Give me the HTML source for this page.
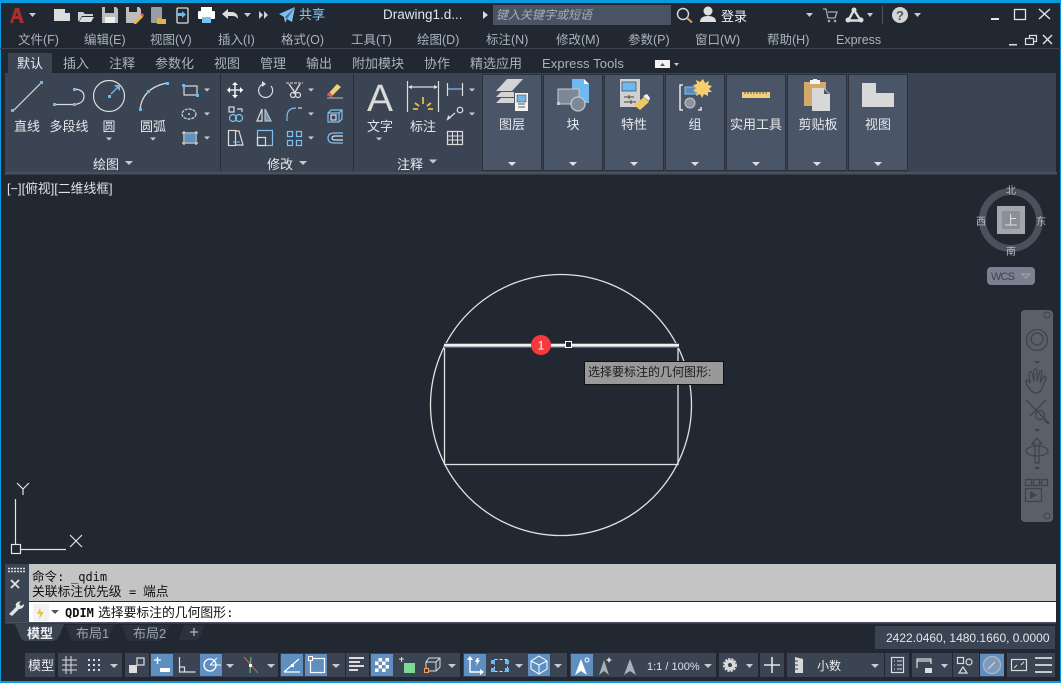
<!DOCTYPE html>
<html><head><meta charset="utf-8"><style>
html,body{margin:0;padding:0;background:#212832;width:1061px;height:683px;overflow:hidden}
svg{display:block;position:absolute;left:0;top:0}
text{font-family:"Liberation Sans","Noto Sans CJK SC",sans-serif}
.m{font-size:12.5px;fill:#aab3bd}
.t{font-size:13px;fill:#aab3bd}
.l{font-size:13px;fill:#e4e7ea;text-anchor:middle}
.p{font-size:13px;fill:#e8eaec;text-anchor:middle}
.c{font-family:"DejaVu Sans Mono","Liberation Mono","Noto Sans CJK SC",monospace;font-size:12px;fill:#111}
.g{fill:#3b4453}
.a{fill:#5f8fc1}
.w{fill:none;stroke:#dcdcdc;stroke-width:1.2}
.b{fill:none;stroke:#7cc0f0;stroke-width:1.2}
.tr{fill:#c8ccd0}
.n{fill:none;stroke:#3e444d;stroke-width:1.3}
</style></head><body>
<svg width="1061" height="683" viewBox="0 0 1061 683" xmlns="http://www.w3.org/2000/svg">
<rect width="1061" height="683" fill="#212832"/>
<!-- window border -->
<rect width="1061" height="3" fill="#0a9ae0"/>
<rect width="1" height="683" fill="#0a9ae0"/>
<rect x="1060" width="1" height="683" fill="#0a9ae0"/>
<rect y="681" width="1061" height="2" fill="#0a9ae0"/>

<!-- title bar -->
<path d="M10 23L15 8h4l5 15h-4l-1-4h-5l-1 4zM15.500 16h2.500l-1.200-4z" fill="#a92e2e" fill-rule="evenodd"/>
<path d="M29 13h7l-3.500 4z" class="tr"/>
<path d="M54 9h11l5 4v8H54z" fill="#dcdcdc"/><path d="M65 9l5 4h-5z" fill="#212832"/>
<path d="M78 12h5l2 2h8v2H82l-3 5h-1z" fill="#cfcfcf"/><path d="M82 17h12l-3 5H79z" fill="#dcdcdc"/>
<path d="M102 7h14l2 2v14h-16z" fill="#bdbdbd"/><rect x="105" y="7" width="9" height="6" fill="#212832"/><rect x="105" y="17" width="10" height="6" fill="#eee"/>
<path d="M126 7h13l2 2v8l-6 6h-9z" fill="#bdbdbd"/><rect x="129" y="7" width="8" height="5" fill="#212832"/><path d="M134 22l7-7 2 2-7 7h-2z" fill="#e9b949"/><path d="M140 14l2-1 2 2-1 2z" fill="#e25a5a"/>
<rect x="151" y="7" width="11" height="16" rx="1" fill="#9a9ea3"/><path d="M157 18h4l1 1h4v5h-9z" fill="#e3b04b"/>
<rect x="177" y="8" width="11" height="15" rx="1" fill="none" stroke="#ddd" stroke-width="1.300"/><path d="M176 13h6v-2l4 3.500-4 3.500v-2h-6z" fill="#6cb8ee"/>
<rect x="201" y="7" width="11" height="4" fill="#fff"/><rect x="198" y="11" width="17" height="8" rx="1" fill="#fff"/><rect x="202" y="17" width="9" height="6" fill="#7cc0f0"/>
<path d="M222 14l6-5v3h5q5 1 5 7-2-3-5-3h-5v3z" fill="#dcdcdc"/>
<path d="M244 13h7l-3.500 4z" class="tr"/>
<path d="M259 11l4 4-4 4zM264 11l4 4-4 4z" fill="#cfcfcf"/>
<path d="M279 14l16-7-3 15-5-3-2 4-1-6z" fill="#7cc0f0"/><path d="M285 17l10-10-8 12z" fill="#212832" opacity=".5"/>
<text x="299" y="19" font-size="13" fill="#8cc8f0">共享</text>
<text x="383" y="19" font-size="13.500" fill="#dce6ee">Drawing1.d...</text>
<path d="M483 11l5 4-5 4z" fill="#dcdcdc"/>
<rect x="493" y="5" width="178" height="20" fill="#4a5364"/>
<text x="496" y="19" font-size="12" font-style="italic" fill="#a8adb5">键入关键字或短语</text>
<circle cx="683" cy="14" r="5.500" fill="none" stroke="#ddd" stroke-width="1.400"/><path d="M687 18l5 4.500" stroke="#c9a860" stroke-width="2"/>
<circle cx="708" cy="11" r="4.500" fill="#e0e0e0"/><path d="M700 22q0-6 8-6t8 6z" fill="#e0e0e0"/>
<text x="721" y="21" font-size="13" fill="#f0f2f4">登录</text>
<path d="M806 13h7l-3.500 4z" class="tr"/>
<path d="M823 9h3l2 9h7l2-6h-9" fill="none" stroke="#aaa" stroke-width="1.300"/><circle cx="829" cy="21" r="1.300" fill="#aaa"/><circle cx="835" cy="21" r="1.300" fill="#aaa"/>
<path d="M854 10l7 11M854 10l-6 11M848 20.500h13" fill="none" stroke="#dcdcdc" stroke-width="2.400"/><circle cx="854" cy="10" r="2.500" fill="#ddd"/><circle cx="848" cy="20" r="2.500" fill="#ddd"/><circle cx="861" cy="20" r="2.500" fill="#ddd"/>
<path d="M867 13h6l-3 4z" class="tr"/>
<rect x="882" y="6" width="1" height="18" fill="#4e5662"/>
<circle cx="900" cy="15" r="8" fill="#d4d4d4"/><text x="900" y="20" font-size="13" font-weight="bold" fill="#55595f" text-anchor="middle">?</text>
<path d="M914 13h7l-3.500 4z" class="tr"/>
<rect x="991" y="18" width="8" height="2" fill="#e4e4e4"/>
<rect x="1014.500" y="9.500" width="11" height="10" fill="none" stroke="#e4e4e4" stroke-width="1.300"/>
<path d="M1039 9l11 10M1050 9l-11 10" stroke="#e4e4e4" stroke-width="1.400"/>

<!-- menu -->
<text class="m" x="18" y="44">文件(F)</text><text class="m" x="84" y="44">编辑(E)</text><text class="m" x="150" y="44">视图(V)</text><text class="m" x="218" y="44">插入(I)</text><text class="m" x="281" y="44">格式(O)</text><text class="m" x="351" y="44">工具(T)</text><text class="m" x="417" y="44">绘图(D)</text><text class="m" x="486" y="44">标注(N)</text><text class="m" x="556" y="44">修改(M)</text><text class="m" x="628" y="44">参数(P)</text><text class="m" x="695" y="44">窗口(W)</text><text class="m" x="767" y="44">帮助(H)</text><text class="m" x="836" y="44">Express</text>
<rect x="1009" y="44" width="8" height="1.500" fill="#ddd"/>
<path d="M1029.500 38.500v-3h7v6h-3" fill="none" stroke="#ddd" stroke-width="1.200"/><rect x="1025.500" y="38.500" width="8" height="6" fill="none" stroke="#ddd" stroke-width="1.200"/>
<path d="M1043 35l9 9M1052 35l-9 9" stroke="#e4e4e4" stroke-width="1.400"/>
<rect x="0" y="48" width="1061" height="1" fill="#3a424e"/>

<!-- tabs -->
<rect x="8" y="53" width="44" height="21" fill="#3b4453"/>
<text x="17" y="68" font-size="13" fill="#eceef0">默认</text>
<text class="t" x="63" y="68">插入</text><text class="t" x="109" y="68">注释</text><text class="t" x="155" y="68">参数化</text><text class="t" x="214" y="68">视图</text><text class="t" x="260" y="68">管理</text><text class="t" x="306" y="68">输出</text><text class="t" x="352" y="68">附加模块</text><text class="t" x="424" y="68">协作</text><text class="t" x="470" y="68">精选应用</text><text class="t" x="542" y="68" letter-spacing=".1">Express Tools</text>
<rect x="655" y="60" width="15" height="8" fill="#f2f2f2"/><path d="M660 66h5l-2.500-3z" fill="#555"/><path d="M674 63h5l-2.500 3z" class="tr"/>

<!-- ribbon -->
<rect x="5" y="73" width="1051" height="99" fill="#3b4453"/>
<rect x="5" y="172" width="1052" height="2.500" fill="#48505d"/>
<rect x="220" y="74" width="1" height="97" fill="#262c36"/>
<rect x="353" y="74" width="1" height="97" fill="#262c36"/>
<g fill="#4a5568" stroke="#2b313c" stroke-width="1">
<rect x="482.500" y="74.500" width="59" height="96"/><rect x="543.500" y="74.500" width="59" height="96"/><rect x="604.500" y="74.500" width="59" height="96"/><rect x="665.500" y="74.500" width="59" height="96"/><rect x="726.500" y="74.500" width="59" height="96"/><rect x="787.500" y="74.500" width="59" height="96"/><rect x="848.500" y="74.500" width="59" height="96"/>
</g>
<!-- draw -->
<path d="M13 111L41 83" stroke="#dcdcdc" stroke-width="1.200"/><rect x="11" y="109" width="3" height="3" fill="#6cb8ee"/><rect x="40" y="81" width="3" height="3" fill="#6cb8ee"/>
<path d="M55 104.500H73M75 89q9 1 9 7.500t-9 8" class="w"/><rect x="53" y="103" width="3" height="3" fill="#6cb8ee"/><rect x="73" y="103" width="3" height="3" fill="#6cb8ee"/><rect x="73" y="88" width="3" height="3" fill="#6cb8ee"/>
<circle cx="109" cy="96" r="15.500" class="w"/><rect x="108" y="95" width="3" height="3" fill="#6cb8ee"/><path d="M111 94l7-7" stroke="#6cb8ee" stroke-width="1.300"/><path d="M114 85h6v6z" fill="#6cb8ee"/>
<path d="M140 110q2-22 27-27" class="w"/><rect x="139" y="108" width="3" height="3" fill="#6cb8ee"/><rect x="147" y="90" width="3" height="3" fill="#6cb8ee"/><rect x="166" y="82" width="3" height="3" fill="#6cb8ee"/>
<rect x="184" y="86" width="13" height="9" class="w"/><rect x="182" y="84" width="3" height="3" fill="#6cb8ee"/><rect x="196" y="94" width="3" height="3" fill="#6cb8ee"/>
<ellipse cx="189" cy="114" rx="7" ry="5" class="w" stroke-dasharray="3 1"/><rect x="188" y="113" width="2" height="2" fill="#6cb8ee"/>
<path d="M182 133h16M182 143h16M184 131v14M196 131v14" class="w"/><path d="M185 134h10v8h-10z" fill="#5b93c8"/>
<g class="tr"><path d="M204 88.500h6l-3 3zM204 112.500h6l-3 3zM204 136.500h6l-3 3zM106 137.500h6l-3 3zM150 137.500h6l-3 3z"/><path d="M125 161h8l-4 4z"/></g>
<text class="l" x="27" y="131">直线</text><text class="l" x="69" y="131">多段线</text><text class="l" x="109" y="131">圆</text><text class="l" x="153" y="131">圆弧</text>
<text class="p" x="106" y="169">绘图</text>
<!-- modify -->
<path d="M235 83v15M228 90h15" stroke="#e6e6e6" stroke-width="1.600"/><path d="M235 82l-3 3h6zM235 98l-3-3h6zM227 90l3-3v6zM243 90l-3-3v6z" fill="#fff"/>
<path d="M263 84a7 7 0 1 0 8 2" class="w"/><path d="M262 81v6l4-3z" fill="#ddd"/>
<path d="M286 83h17" stroke="#ddd" stroke-dasharray="3 1"/><path d="M289 84l7 10M300 84l-6 10" stroke="#ddd" stroke-width="1.400"/><circle cx="293" cy="95" r="2.500" class="w"/><circle cx="298" cy="95" r="2.500" class="w"/>
<path d="M327 95l10-11 4 3-10 10z" fill="#f0cf7a"/><path d="M327 95l3-3 3 4-2 1z" fill="#e25a5a"/><path d="M327 98h16" stroke="#bbb"/>
<rect x="229" y="107" width="5" height="5" class="w"/><path d="M237 109h5v3" class="w"/><circle cx="233" cy="118" r="3.500" class="b"/><circle cx="239" cy="118" r="3.500" class="b"/>
<path d="M262 109l-5 12h5z" class="w"/><path d="M265 109l6 12h-6z" class="w" style="stroke:#aebed0;fill:#7f93a8"/>
<path d="M287 121v-4q0-9 9-9" class="b"/><path d="M298 108h4" class="w"/>
<path d="M328 113l3-3h11v9l-3 3h-11z" class="b"/><path d="M328 113h11v9M339 113l3-3" class="b"/><rect x="331" y="115" width="5" height="5" class="w"/>
<rect x="228.500" y="130.500" width="7" height="15" class="w"/><path d="M235 131h4l4 14h-8" class="w"/><path d="M233 142h7" stroke="#7cc0f0"/>
<rect x="257.500" y="130.500" width="15" height="15" class="b"/><rect x="257.500" y="137.500" width="8" height="8" class="w"/>
<rect x="287.500" y="131.500" width="5" height="5" class="b"/><rect x="296.500" y="131.500" width="5" height="5" class="b"/><rect x="287.500" y="140.500" width="5" height="5" class="b"/><rect x="296.500" y="140.500" width="5" height="5" class="b"/>
<path d="M343 133h-9q-6 0-6 5t6 5h9" class="b"/><path d="M343 136h-8q-3 0-3 2t3 2h8" class="w"/>
<g class="tr"><path d="M308 88.500h6l-3 3zM308 112.500h6l-3 3zM308 136.500h6l-3 3z"/><path d="M299 161h8l-4 4z"/></g>
<text class="p" x="280" y="169">修改</text>
<!-- annotate -->
<text x="367" y="111" font-size="38" fill="#d9d9d9" textLength="26" lengthAdjust="spacingAndGlyphs">A</text>
<text class="l" x="380" y="131">文字</text><path d="M376 137.500h6l-3 3z" class="tr"/>
<path d="M407.500 81v31M438.500 81v31" class="w"/><path d="M409 87h28" class="w"/><path d="M408 87l4-2v4zM438 87l-4-2v4z" fill="#ddd"/>
<path d="M423 97v7M415 103l4 3M431 103l-4 3M413 109h5M428 109h5" stroke="#e9b949" stroke-width="1.800"/>
<text class="l" x="423" y="131">标注</text>
<path d="M447.500 83v13M462.500 83v13" class="w"/><path d="M448 89h14" class="b"/>
<path d="M447 120l8-7" class="w"/><circle cx="460" cy="110" r="2.800" class="w"/><path d="M447 120l1-5 3 3z" fill="#ddd"/>
<rect x="447.500" y="131.500" width="15" height="13" class="w"/><path d="M447.500 136h15M447.500 140h15M452.500 131.500v13M457.500 131.500v13" class="w" style="stroke-width:1"/>
<g class="tr"><path d="M469 88.500h6l-3 3zM469 112.500h6l-3 3z"/><path d="M429 159.500h8l-4 4z"/></g>
<text class="p" x="410" y="169">注释</text>
<!-- panel icons -->
<path d="M496 91l11-12h16l-11 12z" fill="#d4d4d4"/><path d="M496 97l5-5h13v5z" fill="#d4d4d4"/><path d="M496 103l5-5h13v5z" fill="#d4d4d4"/>
<rect x="515" y="93" width="13" height="18" fill="#f2f2f2"/><rect x="517" y="95" width="9" height="7" fill="#6cb8ee" stroke="#333" stroke-width=".5"/><path d="M518 104h7M518 107h7" stroke="#555"/>
<path d="M572 79h12l5 5v19h-17z" fill="#6fb9f0"/><path d="M584 79l5 5h-5z" fill="#fff"/>
<rect x="558" y="89" width="21" height="15" fill="#7c8797" stroke="#ccc"/><circle cx="578" cy="104" r="7" fill="#7c8797" stroke="#c8c8c8" stroke-width="1.300"/><rect x="557" y="102" width="3" height="3" fill="#ccc"/>
<rect x="620" y="79" width="20" height="28" fill="#d0d0d0"/><rect x="622" y="82" width="14" height="9" fill="#6fb9f0" stroke="#333" stroke-width=".6"/><path d="M624 97h10M629 95v4M624 102h12M631 100v4" stroke="#444"/>
<path d="M634 105l10-8 5 5-9 8z" fill="#efc866"/><path d="M643 96l4-2 3 4-1 3z" fill="#f2f2f2"/>
<path d="M683 85h-3v25h3M698 110h3v-3" fill="none" stroke="#fff" stroke-width="1.300"/>
<rect x="685" y="87" width="11" height="7" fill="#5d8bb8" stroke="#7cc0f0"/><circle cx="690" cy="103" r="5" fill="#8d939c" stroke="#c8c8c8"/>
<path d="M703 79l2 4 4-2-1 4 4 1-3 3 3 3-4 0 0 4-4-2-2 4-2-4-4 2 1-4-4-1 3-3-3-3 4-1-1-4 4 2z" fill="#f5cf6c"/>
<rect x="742" y="92" width="28" height="6" fill="#f0cf7a"/><path d="M745 92v2M748 92v2M751 92v2M754 92v2M757 92v2M760 92v2M763 92v2M766 92v2" stroke="#4a5568"/>
<path d="M804 82h22v24h-22z" fill="#d4a76a"/><rect x="810" y="80" width="10" height="4" fill="#f2f2f2"/><rect x="813" y="79" width="4" height="2" fill="#f2f2f2"/>
<path d="M812 88h12l6 6v17h-18z" fill="#d8d8d8"/><path d="M824 89l5 5h-5z" fill="#4a5568"/>
<path d="M862 83h14v10h18v14h-32z" fill="#d8d8d8"/>
<text class="p" x="512" y="129">图层</text><text class="p" x="573" y="129">块</text><text class="p" x="634" y="129">特性</text><text class="p" x="695" y="129">组</text><text class="p" x="756" y="129">实用工具</text><text class="p" x="818" y="129">剪贴板</text><text class="p" x="878" y="129">视图</text>
<g fill="#dcdfe3"><path d="M508 162h8l-4 4zM569 162h8l-4 4zM630 162h8l-4 4zM691 162h8l-4 4zM752 162h8l-4 4zM813 162h8l-4 4zM874 162h8l-4 4z"/></g>

<!-- viewport -->
<text x="7" y="193" font-size="12.800" fill="#e0e2e5">[−][俯视][二维线框]</text>
<circle cx="561" cy="405" r="130.500" fill="none" stroke="#e2e2e2" stroke-width="1.300"/>
<rect x="444.500" y="345.500" width="233.500" height="119" fill="none" stroke="#e2e2e2" stroke-width="1.300"/>
<rect x="444" y="343" width="235" height="5" fill="#596068"/>
<rect x="444" y="344" width="235" height="2.600" fill="#f2f2f2"/>
<circle cx="541" cy="345" r="10" fill="#f43a3c"/><text x="541" y="349.500" font-size="12" fill="#fff" text-anchor="middle">1</text>
<rect x="565.500" y="341.500" width="6" height="6" fill="#212832" stroke="#fff"/>
<rect x="584.500" y="361.500" width="139" height="23" fill="#999" stroke="#111"/>
<text x="588" y="376" font-size="12" fill="#1c1c1c">选择要标注的几何图形:</text>
<!-- UCS -->
<path d="M15.500 499V544M21 549.500H66" stroke="#e4e4e4" stroke-width="1.200"/>
<rect x="11.500" y="544.500" width="9" height="9" fill="none" stroke="#e4e4e4" stroke-width="1.200"/>
<path d="M17 483l6 6 6-6M23 489v6" fill="none" stroke="#e4e4e4" stroke-width="1.200"/>
<path d="M70 535l12 12M82 535l-12 12" stroke="#e4e4e4" stroke-width="1.200"/>
<!-- viewcube -->
<circle cx="1011" cy="220" r="28.500" fill="none" stroke="#4a515c" stroke-width="7"/>
<rect x="997" y="206" width="28" height="28" fill="#a4a6a9"/><rect x="1002" y="211" width="18" height="18" fill="#8b8f99"/>
<text x="1011" y="225" font-size="13" fill="#dcdcdc" text-anchor="middle">上</text>
<g font-size="10" fill="#b8bcc2" text-anchor="middle"><text x="1011" y="194">北</text><text x="1011" y="255">南</text><text x="981" y="225">西</text><text x="1041" y="225">东</text></g>
<rect x="987" y="267" width="48" height="18" rx="4" fill="#7b7f90"/>
<text x="991" y="280" font-size="11" fill="#3f444d" textLength="24">WCS</text><path d="M1022 274h8l-4 4z" fill="none" stroke="#a0a4b0"/>
<!-- nav bar -->
<rect x="1021" y="310" width="32" height="212" rx="4" fill="#5a6069"/>
<circle cx="1047" cy="315" r="3" fill="none" stroke="#3e444d"/><circle cx="1047" cy="516" r="3" fill="none" stroke="#3e444d"/>
<circle cx="1037" cy="340" r="10.500" class="n"/><circle cx="1037" cy="339" r="6" class="n"/>
<path d="M1034 361h6l-3 3z" fill="#3e444d"/>
<path d="M1034 393q-8-6-8-12 1-3 4 2l-1-10q2-3 3 0l2 8v-11q2-2 3 0v11l3-10q2-1 2 1l-2 11 4-7q2 0 2 2l-4 10q-1 5-8 5z" class="n"/>
<path d="M1026 400l20 20M1046 400l-16 16" class="n"/><circle cx="1040" cy="415" r="4.500" class="n"/><path d="M1044 419l5 5" stroke="#3e444d" stroke-width="2.500"/>
<path d="M1034 429h6l-3 3z" fill="#3e444d"/>
<path d="M1037 438l-5 6h3v19h4v-19h3z" class="n"/><ellipse cx="1037" cy="451" rx="11" ry="5" class="n"/>
<path d="M1034 467h6l-3 3z" fill="#3e444d"/>
<rect x="1025.500" y="479.500" width="6" height="6" class="n"/><rect x="1033.500" y="479.500" width="6" height="6" class="n"/><rect x="1041.500" y="479.500" width="6" height="6" class="n"/>
<rect x="1025.500" y="488.500" width="16" height="13" class="n"/><path d="M1030 491v8l7-4z" fill="#3e444d"/>

<!-- command -->
<rect x="5" y="564" width="24" height="58" fill="#3b4453"/>
<path d="M8 568.500h17M8 571.500h17" stroke="#dcdcdc" stroke-width="1.500" stroke-dasharray="2 1"/>
<path d="M11 580l8 8M19 580l-8 8" stroke="#e4e4e4" stroke-width="1.800"/>
<path d="M9 614l7-7q-1-4 2-5l3-1-2 3 2 2 3-2q0 4-4 5l-1 0-7 7z" fill="#e4e4e4"/>
<rect x="29" y="564" width="1027" height="37" fill="#c4c4c4"/>
<rect x="29" y="602" width="1027" height="20" fill="#fff"/>
<rect x="5" y="622" width="1051" height="1.500" fill="#4a5260"/>
<text class="c" x="32" y="581"><tspan style="font-size:12.500px">命令: </tspan><tspan x="71">_qdim</tspan></text>
<text class="c" x="32" y="596"><tspan style="font-size:12.800px">关联标注优先级</tspan><tspan x="129">=</tspan><tspan x="143" style="font-size:12.800px">端点</tspan></text>
<rect x="33" y="604" width="16" height="17" fill="#f2f2f2"/><path d="M40 608l-3 6h3l-1 5 5-7h-3z" fill="#f0c040"/>
<path d="M51 610h8l-4 4z" fill="#555"/>
<text class="c" x="65" y="617" font-weight="bold">QDIM</text>
<text class="c" x="98" y="617" style="font-size:12.800px">选择要标注的几何图形:</text>

<!-- layout tabs -->
<path d="M15 624h49l-4 10q-3 7-7 7H26q-5 0-7-7z" fill="#3b4453"/>
<text x="27" y="638" font-size="13" font-weight="bold" fill="#eef0f2">模型</text>
<path d="M66 625h48l-4 9q-3 7-7 7H75q-5 0-6-7z" fill="#2b323e"/><text x="76" y="638" font-size="13" fill="#9aa3ae">布局1</text>
<path d="M122 625h48l-4 9q-3 7-7 7H131q-5 0-6-7z" fill="#2b323e"/><text x="133" y="638" font-size="13" fill="#9aa3ae">布局2</text>
<path d="M184 625h20l-3 9q-2 6-6 6h-16z" fill="#2b323e"/><path d="M190 632h8M194 628v8" stroke="#9aa3ae" stroke-width="1.500"/>
<rect x="875" y="626" width="180" height="23" fill="#3b4453"/>
<text x="886" y="642" font-size="12" fill="#e4e7ea">2422.0460, 1480.1660, 0.0000</text>

<!-- status -->
<g class="g">
<rect x="25" y="653" width="30" height="24"/><rect x="58" y="653" width="64" height="24"/><rect x="125" y="653" width="24" height="24"/><rect x="150" y="653" width="128" height="24"/><rect x="280" y="653" width="65" height="24"/><rect x="346" y="653" width="23" height="24"/><rect x="370" y="653" width="90" height="24"/><rect x="463" y="653" width="104" height="24"/><rect x="570" y="653" width="146" height="24"/><rect x="719" y="653" width="39" height="24"/><rect x="760" y="653" width="24" height="24"/><rect x="787" y="653" width="97" height="24"/><rect x="885" y="653" width="24" height="24"/><rect x="912" y="653" width="40" height="24"/><rect x="953" y="653" width="26" height="24"/><rect x="980" y="653" width="24" height="24"/><rect x="1007" y="653" width="48" height="24"/>
</g>
<g class="a"><rect x="151" y="654" width="22" height="22"/><rect x="200" y="654" width="22" height="22"/><rect x="281" y="654" width="22" height="22"/><rect x="305" y="654" width="22" height="22"/><rect x="371" y="654" width="22" height="22"/><rect x="464" y="654" width="22" height="22"/><rect x="528" y="654" width="22" height="22"/><rect x="571" y="654" width="22" height="22"/><rect x="980" y="654" width="24" height="22"/></g>
<text x="28" y="670" font-size="13" fill="#e8eaec">模型</text>
<path d="M62 660h15M62 665h15M62 670h15M66 656v18M71 656v18" stroke="#dcdcdc" fill="none"/>
<path d="M88 660h2M93 660h2M98 660h2M88 665h2M93 665h2M98 665h2M88 670h2M93 670h2M98 670h2" stroke="#dcdcdc" stroke-width="2" fill="none"/>
<g class="tr"><path d="M110 664h8l-4 4zM226 664h8l-4 4zM267 664h8l-4 4zM332 664h8l-4 4zM448 664h8l-4 4zM515 664h8l-4 4zM554 664h8l-4 4zM704 664h8l-4 4zM746 664h7l-3.500 4zM871 664h8l-4 4zM941 664h7l-3.500 4z"/></g>
<rect x="129" y="665" width="8" height="8" fill="#ddd"/><path d="M137 665v-7h7v7h-7z" class="w"/>
<path d="M154 660h7M157.500 657v7" stroke="#fff" stroke-width="1.300"/><rect x="160" y="668" width="10" height="4" fill="#fff"/>
<path d="M179.500 657v15h16M179.500 667h5v5" class="w"/>
<circle cx="210" cy="665" r="6" fill="none" stroke="#fff" stroke-width="1.300"/><path d="M210 665h11M210 665l7-7" stroke="#fff"/>
<path d="M244 657l14 16" stroke="#d85d5d"/><path d="M251 657l-1 16" stroke="#5bd67a"/><rect x="249" y="664" width="3" height="3" fill="#fff"/>
<path d="M284 672l15-13M284 672h16" stroke="#fff" stroke-width="1.200"/><rect x="291" y="664" width="3" height="3" fill="#fff"/>
<rect x="310.500" y="658.500" width="14" height="14" fill="none" stroke="#fff" stroke-width="1.200"/><rect x="308.500" y="656.500" width="4" height="4" fill="#5f8fc1" stroke="#fff"/>
<path d="M349 658h15M349 662h11M349 666h15M349 670h9" stroke="#dcdcdc" stroke-width="2"/>
<rect x="375" y="658" width="14" height="14" fill="#fff"/><path d="M375 658h3.500v3.500h-3.500zM382 658h3.500v3.500H382zM378.500 661.500h3.500v3.500h-3.500zM385.500 661.500h3.500v3.500h-3.500zM375 665h3.500v3.500h-3.500zM382 665h3.500v3.500H382zM378.500 668.500h3.500v3.500h-3.500zM385.500 668.500h3.500v3.500h-3.500z" fill="#6b8fb8"/>
<path d="M399 659h5M401.500 657v5" stroke="#ddd"/><rect x="404" y="663" width="11" height="10" fill="#7dd896"/>
<rect x="424.500" y="668.500" width="4" height="4" fill="none" stroke="#f0a060"/><path d="M426 668v-6l3-4h11v9l-4 4h-7M426 662h10v9M436 662l4-4" fill="none" stroke="#dcdcdc"/>
<path d="M470 657v15h13" fill="none" stroke="#fff" stroke-width="1.400"/><path d="M470 656l-3 4h6zM484 672l-4-3v6z" fill="#fff"/><path d="M477 658l-2 4h2l-1 4 4-6h-2l1-2z" fill="#fff"/>
<rect x="494.500" y="659.500" width="13" height="12" fill="none" stroke="#ddd" stroke-dasharray="3 2"/><rect x="491" y="660" width="4" height="4" fill="#6cb8ee"/><rect x="505" y="660" width="4" height="4" fill="#6cb8ee"/><rect x="491" y="668" width="4" height="4" fill="#6cb8ee"/><rect x="505" y="668" width="4" height="4" fill="#6cb8ee"/>
<path d="M539 656l8 5v8l-8 5-8-5v-8zM539 665v9M539 665l-8-4M539 665l8-4" fill="none" stroke="#fff"/>
<path d="M575 675l6-16 6 16-6-4z" fill="#fff"/><circle cx="587" cy="660" r="2" fill="none" stroke="#fff"/>
<path d="M599 675l5-15 5 15-5-4z" fill="#aab0b8"/><path d="M609 657l1 2 2 1-2 1-1 2-1-2-2-1 2-1z" fill="#ddd"/>
<path d="M624 675l6-16 6 16-6-4z" fill="#aab0b8"/>
<text x="647" y="670" font-size="11" fill="#dfe2e6">1:1 / 100%</text>
<circle cx="730" cy="665" r="5.500" fill="#d8d8d8" stroke="#d8d8d8" stroke-dasharray="2 1" stroke-width="3"/><circle cx="730" cy="665" r="2" fill="#3b4453"/>
<path d="M772 657v16M764 665h16" stroke="#e4e4e4" stroke-width="1.600"/>
<path d="M795 657l8 2v14h-8z" fill="#d8d8d8"/><path d="M795 661h3M795 665h3M795 669h3" stroke="#3b4453"/>
<text x="817" y="670" font-size="12" fill="#e8eaec">小数</text>
<rect x="891.500" y="657.500" width="12" height="15" class="w"/><path d="M894 661h1M897 661h5M894 665h1M897 665h5M894 669h1M897 669h5" stroke="#ddd"/>
<path d="M917 668v-9h14v5M917 661h14" class="w"/><rect x="925" y="668" width="7" height="5" fill="#ddd"/>
<rect x="957.500" y="657.500" width="6" height="6" class="w"/><circle cx="969" cy="662" r="3" class="w"/><path d="M963 667l-4 6h8z" class="w"/>
<circle cx="992" cy="665" r="8.500" fill="#7f99b8" stroke="#a8b8ca" stroke-width="1.300"/><path d="M988 669l7-7" stroke="#ccd" stroke-width="1.300"/>
<rect x="1011.500" y="659.500" width="15" height="11" class="w"/><path d="M1014 668l3-3M1024 662l-3 3" stroke="#ddd"/>
<path d="M1035 658h17M1035 665h17M1035 672h17" stroke="#dcdcdc" stroke-width="1.700"/>
</svg>
</body></html>
